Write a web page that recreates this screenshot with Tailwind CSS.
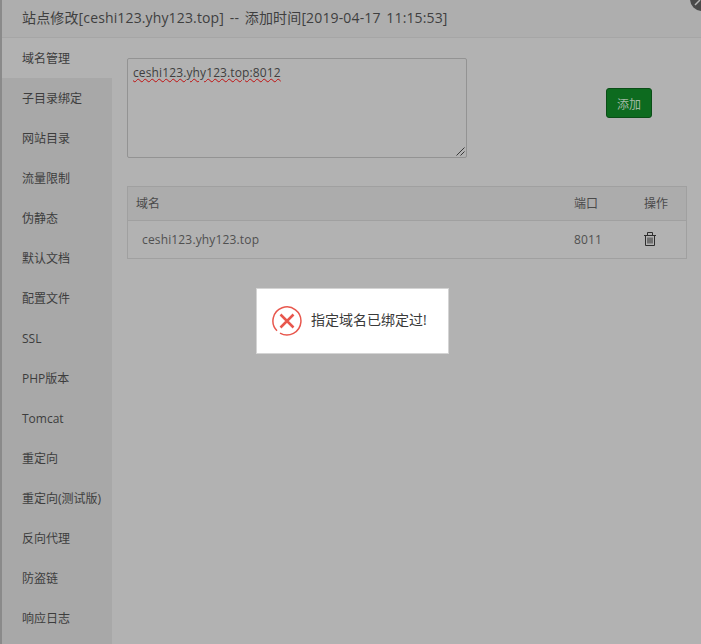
<!DOCTYPE html>
<html lang="en">
<head>
  <meta charset="UTF-8" />
  <title>站点修改</title>
  <script src="https://cdn.jsdelivr.net/npm/@tailwindcss/browser@4"></script>
</head>
<body class="bg-[#8a8a8a] h-[644px] w-[701px] overflow-hidden relative font-['Open_Sans','Noto_Sans_CJK_SC',sans-serif]">

  <!-- layer -->
  <div class="ml-[2px] h-[644px] bg-[#b2b2b2] flex flex-col">
    <div class="h-[38px] shrink-0 bg-[#aeaeae] border-b border-[#a6a6a6] pl-5 text-[14px] leading-[35px] tracking-[0.14px] [word-spacing:2px] text-[#3f3f3f]">站点修改[ceshi123.yhy123.top] -- 添加时间[2019-04-17 11:15:53]</div>

    <div class="flex flex-1">
      <!-- side menu -->
      <div class="w-[110px] bg-[#a8a8a8] text-[12px] text-[#3d3d3d] shrink-0">
        <div class="h-10 leading-[42px] pl-5 bg-[#b2b2b2]">域名管理</div>
        <div class="h-10 leading-[42px] pl-5">子目录绑定</div>
        <div class="h-10 leading-[42px] pl-5">网站目录</div>
        <div class="h-10 leading-[42px] pl-5">流量限制</div>
        <div class="h-10 leading-[42px] pl-5">伪静态</div>
        <div class="h-10 leading-[42px] pl-5">默认文档</div>
        <div class="h-10 leading-[42px] pl-5">配置文件</div>
        <div class="h-10 leading-[42px] pl-5">SSL</div>
        <div class="h-10 leading-[42px] pl-5">PHP版本</div>
        <div class="h-10 leading-[42px] pl-5">Tomcat</div>
        <div class="h-10 leading-[42px] pl-5">重定向</div>
        <div class="h-10 leading-[42px] pl-5">重定向(测试版)</div>
        <div class="h-10 leading-[42px] pl-5">反向代理</div>
        <div class="h-10 leading-[42px] pl-5">防盗链</div>
        <div class="h-10 leading-[42px] pl-5">响应日志</div>
      </div>

      <!-- content -->
      <div class="pl-[15px] pt-5 w-[575px]">
        <div class="flex items-start">
          <div class="relative w-[340px] h-[100px] border border-[#939393] rounded-[2px] px-[5px] py-[5px] text-[12px] leading-[18px] tracking-[0.12px] text-[#3f3f3f]">
            <span class="underline decoration-wavy decoration-[#c01010] decoration-1 underline-offset-[1px]">ceshi123.yhy123.top:8012</span>
            <svg class="absolute right-[1px] bottom-[1px]" width="10" height="10" viewBox="0 0 10 10" fill="none" stroke="#3a3a3a" stroke-width="1"><path d="M1.5 9.5 9.5 1.5M5.5 9.5 9.5 5.5"/></svg>
          </div>
          <div class="ml-[139px] mt-[30px] w-[46px] h-[30px] bg-[#0d6b1f] border border-[#0a4d17] rounded-[3px] text-[12px] leading-[31px] text-center text-[#a3b8a6]">添加</div>
        </div>

        <div class="mt-7 w-[560px] border border-[#a0a0a0] text-[12px] text-[#4a4a4a]">
          <div class="flex h-[34px] items-center bg-[#acacac] border-b border-[#a0a0a0]">
            <div class="pl-2 w-[446px]">域名</div>
            <div class="w-[70px]">端口</div>
            <div>操作</div>
          </div>
          <div class="flex h-[37px] items-center tracking-[0.15px]">
            <div class="pl-[14px] w-[446px] text-[#505050]">ceshi123.yhy123.top</div>
            <div class="w-[70px] text-[#505050]">8011</div>
            <svg class="-mt-px" width="12" height="14" viewBox="0 0 12 14" fill="none" stroke="#2e2e2e" stroke-width="1"><path d="M0 3.500h12M3.500 3V.5h5V3M1.500 4v9.500h9V4"/><path d="M4 5.500v6M6 5.500v6M8 5.500v6"/></svg>
          </div>
        </div>
      </div>
    </div>
  </div>

  <!-- close button of the layer -->
  <div class="absolute right-[-13px] top-[-13px] w-[24px] h-[24px] rounded-full bg-[#4a4a4a] overflow-hidden">
    <svg width="24" height="24" viewBox="0 0 24 24" stroke="#b5b5b5" stroke-width="1.500"><path d="M5 18 10 13"/></svg>
  </div>

  <!-- message -->
  <div class="absolute left-[256px] top-[288px] w-[193px] h-[66px] bg-white border border-[#d4d4d4] flex items-center pl-[15px] text-[14px] text-[#3a3a3a]">
    <svg width="30" height="30" viewBox="0 0 30 30" fill="none" class="shrink-0 -mt-px"><path d="M8 27.100A14 14 0 1 0 5 24.800" stroke="#e8574d" stroke-width="1.500"/><path d="M8.500 8.500 21.500 21.500M21.500 8.500 8.500 21.500" stroke="#e8574d" stroke-width="2.500"/></svg>
    <span class="ml-[9px] -mt-[3px]">指定域名已绑定过!</span>
  </div>

</body>
</html>
